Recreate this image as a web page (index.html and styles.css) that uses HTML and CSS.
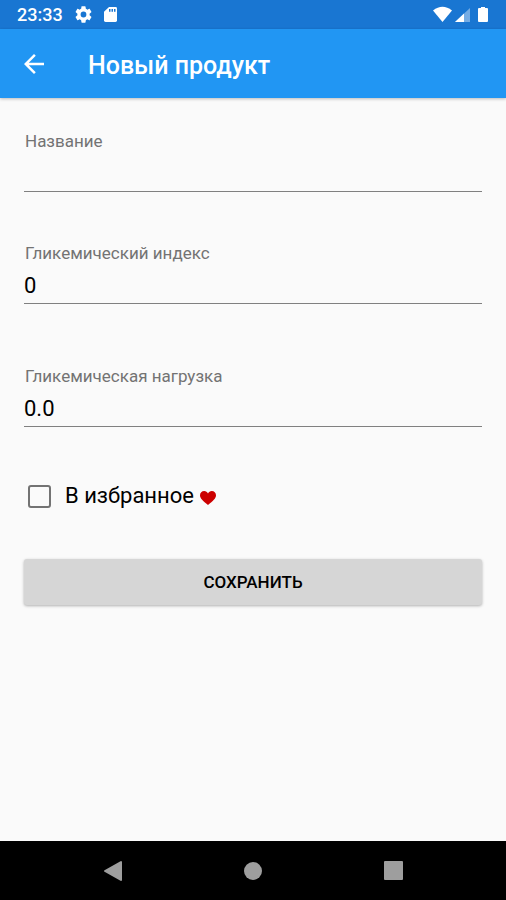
FILE: index.html
```html
<!DOCTYPE html>
<html lang="ru">
<head>
<meta charset="utf-8">
<meta name="viewport" content="width=device-width, initial-scale=1">
<title>Новый продукт</title>
<link rel="stylesheet" href="styles.css">
</head>
<body>
<div class="status">
  <span class="clock">23:33</span>
  <svg class="gear" width="17" height="17" viewBox="2 2 20 20" fill="#fff" aria-hidden="true"><path d="M19.14 12.94c.04-.3.06-.61.06-.94s-.02-.64-.07-.94l2.03-1.58c.18-.14.23-.41.12-.61l-1.92-3.32c-.12-.22-.37-.29-.59-.22l-2.39.96c-.5-.38-1.03-.7-1.62-.94l-.36-2.54A.48.48 0 0 0 13.92 2.400h-3.840c-.24 0-.43.17-.47.41l-.36 2.540c-.59.24-1.13.57-1.62.94l-2.390-.96c-.22-.08-.47 0-.59.22L2.740 8.870c-.12.21-.08.47.12.61l2.030 1.580c-.05.3-.09.63-.09.94s.02.64.07.94l-2.030 1.580c-.18.14-.23.41-.12.61l1.920 3.320c.12.22.37.29.59.22l2.390-.96c.5.38 1.030.7 1.620.94l.36 2.540c.05.24.24.41.48.41h3.840c.24 0 .44-.17.47-.41l.36-2.540c.59-.24 1.130-.56 1.620-.94l2.390.96c.22.08.47 0 .59-.22l1.920-3.320c.12-.22.07-.47-.12-.61zM12 15.400a3.400 3.400 0 1 1 0-6.800 3.400 3.400 0 0 1 0 6.800z"/></svg>
  <svg class="card" width="13" height="15" viewBox="0 0 13 16" preserveAspectRatio="none" aria-hidden="true"><path fill="#fff" d="M5 0h6.500A1.500 1.500 0 0 1 13 1.500v13a1.500 1.500 0 0 1-1.500 1.500h-10A1.500 1.500 0 0 1 0 14.500V5z"/><path fill="#1976d2" d="M5 2h1.500v3H5zM7.500 2H9v3H7.500zM10 2h1.500v3H10z"/></svg>
  <svg class="signals" width="56" height="18" viewBox="0 0 56 18" aria-hidden="true"><path fill="#fff" d="M0 4.500Q9.500-3 19 4.500L9.500 16z"/><path fill="#fff" fill-opacity=".4" d="M37 2v14H22z"/><path fill="#fff" d="M31 7.500V16h-9z"/><path fill="#fff" d="M48 1h4v1h2a1 1 0 0 1 1 1v12a1 1 0 0 1-1 1h-8a1 1 0 0 1-1-1V3a1 1 0 0 1 1-1h2z"/></svg>
</div>
<header class="bar">
  <button class="back" type="button" aria-label="Назад"><svg width="20" height="20" viewBox="4 4 16 16" fill="#fff"><path d="M20 11H7.830l5.590-5.590L12 4l-8 8 8 8 1.410-1.410L7.830 13H20z"/></svg></button>
  <h1>Новый продукт</h1>
</header>
<main>
  <form>
    <div class="field">
      <label for="name">Название</label>
      <input id="name" type="text">
    </div>
    <div class="field">
      <label for="index">Гликемический индекс</label>
      <input id="index" type="text" inputmode="numeric" value="0">
    </div>
    <div class="field load">
      <label for="load">Гликемическая нагрузка</label>
      <input id="load" type="text" inputmode="decimal" value="0.0">
    </div>
    <label class="favorite">
      <input type="checkbox">
      <span>В избранное</span>
      <svg width="16" height="14" viewBox="0 0 16 14" aria-hidden="true"><path fill="#cc0000" d="M8 14C3 10 0 7.500 0 4.300 0 1.700 1.900 0 4.200 0 5.900 0 7.300 1 8 2.400 8.700 1 10.100 0 11.800 0 14.100 0 16 1.700 16 4.300 16 7.500 13 10 8 14z"/></svg>
    </label>
    <button class="save" type="button">СОХРАНИТЬ</button>
  </form>
</main>
<nav class="system">
  <button type="button" aria-label="Назад"><svg width="20" height="22" viewBox="0 0 20 22"><path fill="#9e9e9e" stroke="#9e9e9e" stroke-width="2" stroke-linejoin="round" d="M18 2v18L2 11z"/></svg></button>
  <button type="button" aria-label="Домой"><svg width="18" height="18" viewBox="0 0 18 18"><circle cx="9" cy="9" r="9" fill="#9e9e9e"/></svg></button>
  <button type="button" aria-label="Обзор"><svg width="19" height="19" viewBox="0 0 19 19"><rect width="19" height="19" rx="1" fill="#9e9e9e"/></svg></button>
</nav>
</body>
</html>
```
FILE: styles.css
```css
* {
  box-sizing: border-box;
}

body {
  margin: 0;
  min-height: 100vh;
  display: flex;
  flex-direction: column;
  background: #fafafa;
  color: #000;
  font-family: Roboto, "Noto Sans", sans-serif;
}

button {
  border: 0;
  padding: 0;
  background: none;
  font-family: inherit;
}

svg {
  display: block;
  flex: none;
}

.status {
  height: 29px;
  padding: 0 17px;
  display: flex;
  align-items: center;
  background: #1976d2;
  color: #fff;
}

.clock {
  font-size: 18px;
  line-height: 29px;
  font-weight: 500;
}

.gear {
  margin-left: 12px;
}

.card {
  margin-left: 12px;
}

.signals {
  margin-left: auto;
}

.bar {
  height: 69px;
  padding: 0 24px;
  display: flex;
  align-items: center;
  gap: 44px;
  background: #2196f3;
  color: #fff;
  box-shadow: 0 1px 3px rgba(0, 0, 0, 0.25);
}

.bar h1 {
  margin: 0;
  padding-top: 4px;
  font-size: 25px;
  line-height: 32px;
  font-weight: 500;
}

main {
  flex: 1;
  padding: 32px 24px;
}

.field {
  display: flex;
  flex-direction: column;
  margin-bottom: 50px;
}

.field.load {
  margin-top: 61px;
}

.field label {
  padding-left: 1px;
  font-size: 17px;
  line-height: 22px;
  color: #737373;
}

.field input {
  width: 100%;
  height: 40px;
  padding: 3px 0 0;
  border: 0;
  border-bottom: 1px solid #808080;
  border-radius: 0;
  background: none;
  color: #000;
  font-family: inherit;
  font-size: 22px;
  outline: 0;
}

.favorite {
  display: flex;
  align-items: center;
  padding-left: 4px;
  font-size: 22px;
  line-height: 38px;
}

.favorite input {
  appearance: none;
  width: 23px;
  height: 23px;
  margin: 0 14px 0 0;
  border: 2px solid #737373;
  border-radius: 3px;
}

.favorite input:checked {
  background: #2196f3;
}

.favorite svg {
  margin: 3px 0 0 6px;
}

.save {
  width: 100%;
  height: 46px;
  margin-top: 44px;
  border-radius: 3px;
  background: #d6d6d6;
  box-shadow: 0 1px 3px rgba(0, 0, 0, 0.3);
  color: #000;
  font-size: 17px;
  font-weight: 500;
}

.system {
  height: 59px;
  display: grid;
  grid-template-columns: repeat(3, 140px);
  justify-content: center;
  background: #000;
}

.system button {
  display: grid;
  place-items: center;
}
```
